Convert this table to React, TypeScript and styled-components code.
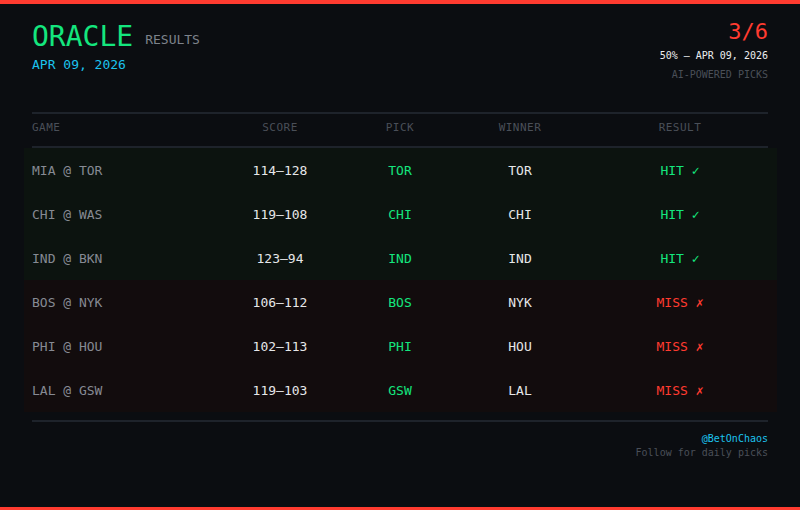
import styled, { createGlobalStyle } from "styled-components";

const GlobalStyle = createGlobalStyle`
  html, body {
    margin: 0;
    padding: 0;
    background: #0b0d11;
  }
  * {
    box-sizing: border-box;
  }
`;

const Page = styled.div`
  width: 800px;
  height: 510px;
  background: #0b0d11;
  border-top: 4px solid #ff3b30;
  border-bottom: 3px solid #ff3b30;
  padding: 19px 32px 0;
  font-family: "DejaVu Sans Mono", "Liberation Mono", monospace;
  overflow: hidden;
`;

const Header = styled.header`
  display: flex;
  justify-content: space-between;
  align-items: flex-start;
  height: 89px;
`;

const TitleRow = styled.div`
  display: flex;
  align-items: flex-end;
  gap: 12px;
`;

const Title = styled.h1`
  margin: 0;
  font-size: 28px;
  line-height: 28px;
  font-weight: 400;
  color: #14e67e;
`;

const Subtitle = styled.span`
  font-size: 13px;
  line-height: 13px;
  color: #7d828b;
  margin-bottom: 5px;
`;

const DateText = styled.div`
  margin-top: 7px;
  font-size: 13px;
  line-height: 13px;
  color: #1cc3ee;
`;

const Stats = styled.div`
  display: flex;
  flex-direction: column;
  align-items: flex-end;
  padding-top: 0;
  margin-top: -2px;
`;

const Record = styled.div`
  font-size: 22px;
  line-height: 22px;
  color: #ff3b30;
`;

const Meta = styled.div<{ $muted?: boolean }>`
  font-size: 10px;
  line-height: 10px;
  margin-top: ${(p) => (p.$muted ? "9px" : "8px")};
  color: ${(p) => (p.$muted ? "#4a4f58" : "#eceef0")};
`;

const Table = styled.div`
  border-top: 2px solid #1e232b;
  border-bottom: 2px solid #1e232b;
  padding-bottom: 8px;
`;

const Columns = styled.div`
  display: grid;
  grid-template-columns: 188px 120px 120px 120px 200px;
  align-items: center;
`;

const HeadRow = styled(Columns)`
  padding: 8px 0 13px;
  border-bottom: 2px solid #1e232b;
`;

const HeadCell = styled.div<{ $left?: boolean }>`
  font-size: 11px;
  line-height: 11px;
  letter-spacing: 0.5px;
  color: #4a4f58;
  text-align: ${(p) => (p.$left ? "left" : "center")};
`;

const Row = styled(Columns)<{ $hit: boolean }>`
  height: 44px;
  margin: 0 -9px 0 -8px;
  padding: 0 9px 0 8px;
  background: ${(p) => (p.$hit ? "#0c130f" : "#120c0d")};
`;

const Cell = styled.div<{ $tone: "game" | "plain" | "pick" | "hit" | "miss" }>`
  font-size: 13px;
  line-height: 13px;
  text-align: ${(p) => (p.$tone === "game" ? "left" : "center")};
  color: ${(p) =>
    p.$tone === "game"
      ? "#868a93"
      : p.$tone === "plain"
      ? "#e6e7e9"
      : p.$tone === "miss"
      ? "#ff3b30"
      : "#14e67e"};
`;

const Footer = styled.footer`
  display: flex;
  flex-direction: column;
  align-items: flex-end;
  padding-top: 10px;
  font-size: 10px;
  line-height: 14px;
`;

const Handle = styled.div`
  color: #1cc3ee;
`;

const Follow = styled.div`
  color: #4a4f58;
`;

const games = [
  { game: "MIA @ TOR", score: "114\u2013128", pick: "TOR", winner: "TOR" },
  { game: "CHI @ WAS", score: "119\u2013108", pick: "CHI", winner: "CHI" },
  { game: "IND @ BKN", score: "123\u201394", pick: "IND", winner: "IND" },
  { game: "BOS @ NYK", score: "106\u2013112", pick: "BOS", winner: "NYK" },
  { game: "PHI @ HOU", score: "102\u2013113", pick: "PHI", winner: "HOU" },
  { game: "LAL @ GSW", score: "119\u2013103", pick: "GSW", winner: "LAL" },
];

export default function App() {
  return (
    <>
      <GlobalStyle />
      <Page>
        <Header>
          <div>
            <TitleRow>
              <Title>ORACLE</Title>
              <Subtitle>RESULTS</Subtitle>
            </TitleRow>
            <DateText>APR 09, 2026</DateText>
          </div>
          <Stats>
            <Record>3/6</Record>
            <Meta>50% — APR 09, 2026</Meta>
            <Meta $muted>AI-POWERED PICKS</Meta>
          </Stats>
        </Header>

        <Table>
          <HeadRow>
            <HeadCell $left>GAME</HeadCell>
            <HeadCell>SCORE</HeadCell>
            <HeadCell>PICK</HeadCell>
            <HeadCell>WINNER</HeadCell>
            <HeadCell>RESULT</HeadCell>
          </HeadRow>
          {games.map((g) => {
            const hit = g.pick === g.winner;
            return (
              <Row key={g.game} $hit={hit}>
                <Cell $tone="game">{g.game}</Cell>
                <Cell $tone="plain">{g.score}</Cell>
                <Cell $tone="pick">{g.pick}</Cell>
                <Cell $tone="plain">{g.winner}</Cell>
                <Cell $tone={hit ? "hit" : "miss"}>
                  {hit ? "HIT \u2713" : "MISS \u2717"}
                </Cell>
              </Row>
            );
          })}
        </Table>

        <Footer>
          <Handle>@BetOnChaos</Handle>
          <Follow>Follow for daily picks</Follow>
        </Footer>
      </Page>
    </>
  );
}
